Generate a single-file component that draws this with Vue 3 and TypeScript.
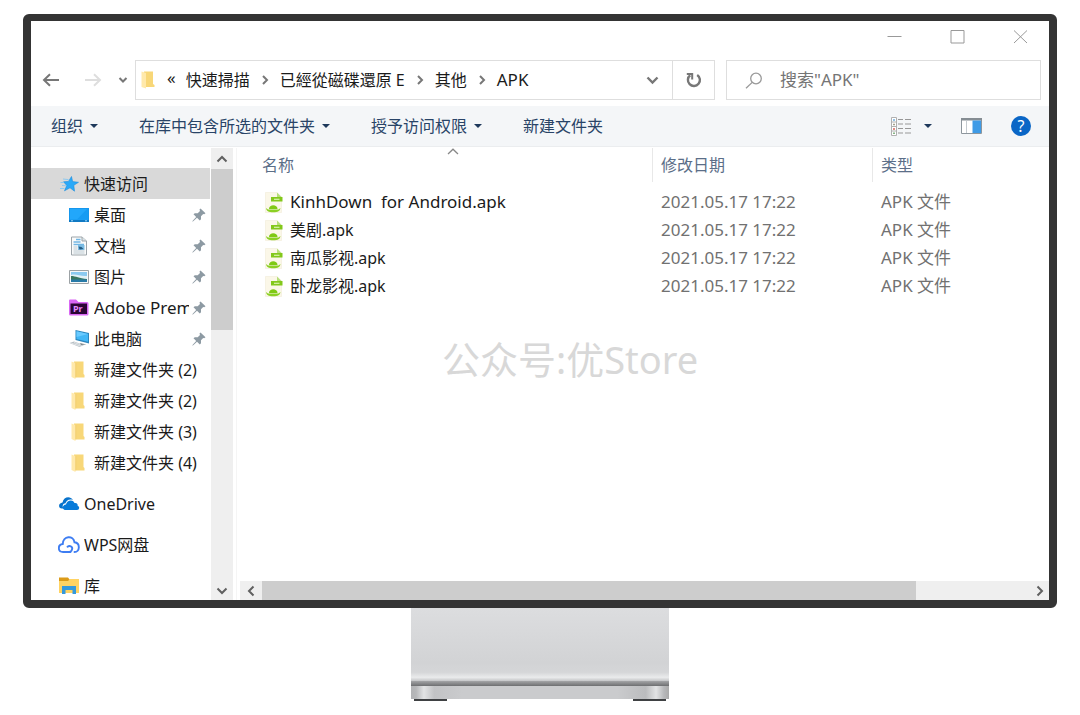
<script setup lang="ts">
interface SideItem {
  label: string
  icon: string
  pinned?: boolean
  level: 'root' | 'child'
  selected?: boolean
}

interface FileRow {
  name: string
  modified: string
  type: string
}

const crumbs: string[] = ['快速掃描', '已經從磁碟還原 E', '其他', 'APK']

const commands: { label: string; menu: boolean }[] = [
  { label: '组织', menu: true },
  { label: '在库中包含所选的文件夹', menu: true },
  { label: '授予访问权限', menu: true },
  { label: '新建文件夹', menu: false },
]

const sideItems: SideItem[] = [
  { label: '快速访问', icon: 'star', level: 'root', selected: true },
  { label: '桌面', icon: 'desktop', level: 'child', pinned: true },
  { label: '文档', icon: 'document', level: 'child', pinned: true },
  { label: '图片', icon: 'picture', level: 'child', pinned: true },
  { label: 'Adobe Prem', icon: 'premiere', level: 'child', pinned: true },
  { label: '此电脑', icon: 'computer', level: 'child', pinned: true },
  { label: '新建文件夹 (2)', icon: 'folder', level: 'child' },
  { label: '新建文件夹 (2)', icon: 'folder', level: 'child' },
  { label: '新建文件夹 (3)', icon: 'folder', level: 'child' },
  { label: '新建文件夹 (4)', icon: 'folder', level: 'child' },
  { label: 'OneDrive', icon: 'onedrive', level: 'root' },
  { label: 'WPS网盘', icon: 'wps', level: 'root' },
  { label: '库', icon: 'library', level: 'root' },
]

const files: FileRow[] = [
  'KinhDown  for Android.apk',
  '美剧.apk',
  '南瓜影视.apk',
  '卧龙影视.apk',
].map((name) => ({ name, modified: '2021.05.17 17:22', type: 'APK 文件' }))

const isLatin = (text: string): boolean => /^[A-Z]\w+ +[\w. ]+$/.test(text)
</script>

<template>
  <div class="stage">
    <section class="monitor">
      <header class="titlebar">
        <button aria-label="最小化">
          <svg width="15" height="15" viewBox="0 0 15 15"><path d="M0.500 7.500H14.500" /></svg>
        </button>
        <button aria-label="最大化">
          <svg width="15" height="15" viewBox="0 0 15 15"><path d="M1 1.500H14V14H1Z" /></svg>
        </button>
        <button aria-label="关闭">
          <svg width="15" height="15" viewBox="0 0 15 15"><path d="M1 1.500L14 14M14 1.500L1 14" /></svg>
        </button>
      </header>

      <div class="navrow">
        <button class="nav-btn back" aria-label="后退">
          <svg width="18" height="14" viewBox="0 0 18 14"><path d="M17 7H2M8 1.200L2 7L8 12.800" /></svg>
        </button>
        <button class="nav-btn forward" aria-label="前进">
          <svg width="18" height="14" viewBox="0 0 18 14"><path d="M1 7H16M10 1.200L16 7L10 12.800" /></svg>
        </button>
        <button class="nav-btn recent" aria-label="最近位置">
          <svg width="10" height="8" viewBox="0 0 10 8"><path d="M1.500 2L5 5.500L8.500 2" /></svg>
        </button>
        <div class="address">
          <svg class="addr-folder" width="14" height="18" viewBox="0 0 14 18">
            <path d="M3 0.500H12V13L13.500 14V16H3Z" fill="#f8d778" />
            <path d="M0.500 0.500L5 2V17.500L0.500 16Z" fill="#ffe9ab" />
          </svg>
          <button class="root-crumb">«</button>
          <template v-for="(crumb, i) in crumbs" :key="crumb">
            <svg v-if="i > 0" class="sep" width="8" height="10" viewBox="0 0 8 10"><path d="M2 1L6 5L2 9" /></svg>
            <button class="crumb" :class="{ last: i === crumbs.length - 1 }">{{ crumb }}</button>
          </template>
          <button class="addr-drop" aria-label="历史记录">
            <svg width="13" height="9" viewBox="0 0 13 9"><path d="M1.500 1.500L6.500 6.500L11.500 1.500" /></svg>
          </button>
          <button class="refresh" aria-label="刷新">
            <svg width="16" height="16" viewBox="0 0 16 16">
              <path d="M11.200 3A6 6 0 1 1 4.200 3.300" fill="none" stroke="#777" stroke-width="2.400" />
              <path d="M0.800 1H7.200V7.400H5.200V3.100H0.800Z" fill="#777" />
            </svg>
          </button>
        </div>
        <label class="search">
          <svg width="18" height="17" viewBox="0 0 18 17">
            <circle cx="11" cy="6.500" r="5.300" />
            <path d="M7.200 10.400L1 16.200" />
          </svg>
          <input type="text" aria-label="搜索" placeholder="搜索&quot;APK&quot;" />
        </label>
      </div>

      <div class="commandbar">
        <button v-for="c in commands" :key="c.label" class="command">
          {{ c.label }}<i v-if="c.menu" class="caret"></i>
        </button>
        <div class="tools">
          <button class="view-btn" aria-label="更改视图">
            <svg width="21" height="19" viewBox="0 0 21 19">
              <path d="M0.500 0.500H5.500V18.500H0.500ZM0.500 5H5.500M0.500 9.500H5.500M0.500 14H5.500" fill="#fff" stroke="#b0b0b0" />
              <path d="M2.200 3H3.800" stroke="#4b9bd8" stroke-width="1.600" />
              <path d="M2.200 7.500H3.800" stroke="#8e8b70" stroke-width="1.600" />
              <path d="M2.200 12H3.800" stroke="#cf3b31" stroke-width="1.600" />
              <path d="M2.200 16.300H3.800" stroke="#68a267" stroke-width="1.600" />
              <path d="M7 2.500H12M14 2.500H20M7 7H12M14 7H20M7 11.500H12M14 11.500H20M7 16H12M14 16H20" stroke="#979797" stroke-width="1.200" />
            </svg>
            <i class="caret"></i>
          </button>
          <button aria-label="预览窗格">
            <svg width="21" height="16" viewBox="0 0 21 16">
              <path d="M0.500 0.500H20.500V15.500H0.500Z" fill="#fff" stroke="#8d969d" />
              <path d="M0 0H21V2.500H0Z" fill="#858d93" />
              <path d="M5.500 2.500V15" stroke="#c5cbd0" />
              <path d="M11.500 2.500H20V15H11.500Z" fill="#3f9be6" />
            </svg>
          </button>
          <button class="help" aria-label="帮助"><span>?</span></button>
        </div>
      </div>

      <div class="content">
        <nav class="sidebar">
          <button
            v-for="(item, i) in sideItems"
            :key="i"
            class="side-item"
            :class="[item.level, { selected: item.selected, spaced: item.level === 'root' && i > 0 }]"
          >
            <svg class="side-icon" width="22" height="20" viewBox="0 0 22 20">
              <template v-if="item.icon === 'star'">
                <path d="M13.500 2.500L14.600 7.600L20.500 8.300L15.800 11.300L16.500 17.200L12 13.800L6.500 16.800L8.800 11.500L5.500 7.800L10.500 7.400Z" fill="#2aa9f8" stroke="#1b8ddd" stroke-width="0.600" />
                <path d="M5 5L10.500 5.600M2.500 8.500L6 8.500M4 11.500L8 11.800M2 14.500H6.500" stroke="#8ec9ef" />
              </template>
              <template v-else-if="item.icon === 'desktop'">
                <path d="M1 3H21V17H1Z" fill="#1597ed" />
                <path d="M2 4H20V14.500H2Z" fill="#22a7fb" />
                <path d="M9 14.500L19 4H20V14.500Z" fill="#169cf3" />
                <path d="M1 16H21" stroke="#0f6fb4" stroke-width="1.500" />
                <path d="M3 15.800H5M17 15.800H19" stroke="#9bd9ff" />
              </template>
              <template v-else-if="item.icon === 'document'">
                <path d="M3.500 1H14L18.500 5V19H3.500Z" fill="#fafbfb" stroke="#9da5aa" />
                <path d="M14 1V5H18.500" fill="#dce4e8" stroke="#9da5aa" />
                <path d="M8 3.500H12.500M5.500 6H12.500M5.500 8.500H16" stroke="#72b6e4" stroke-width="1.500" />
                <path d="M5.500 11H9.500M5.500 13H9.500M5.500 15H16.500M5.500 17H16.500" stroke="#b4c3cc" stroke-width="0.900" />
                <path d="M10 9H16.500V14H10Z" fill="#7cbde4" />
                <path d="M10.500 10.500L13.500 11L15.500 13L11.500 13.500Z" fill="#265e86" />
              </template>
              <template v-else-if="item.icon === 'picture'">
                <path d="M1.500 3.500H20.500V16.500H1.500Z" fill="#f8f8f8" stroke="#9ca2a5" />
                <path d="M3 5H19V15H3Z" fill="#8bcaf0" />
                <path d="M3 8C8 6.500 12 9.500 19 9V12H3Z" fill="#e2f1f6" />
                <path d="M3 9C8 9 11 11.500 19 12V13H3Z" fill="#397761" />
                <path d="M3 12.500H19V15H3Z" fill="#287aa7" />
              </template>
              <template v-else-if="item.icon === 'premiere'">
                <path d="M1 2.500Q1 1.500 2 1.500H8L10.500 4H19Q20.500 4 20.500 5.500V16Q20.500 17.500 19 17.500H2.500Q1 17.500 1 16Z" fill="#d967f4" />
                <path d="M2.500 5.500H19V16H2.500Z" fill="#2b0635" />
                <text x="5" y="14" font-size="9" font-weight="700" fill="#e58bff">Pr</text>
              </template>
              <template v-else-if="item.icon === 'computer'">
                <path d="M7.500 1L21 4V14.500L7.500 11Z" fill="#2c86bd" />
                <path d="M8.500 2.300L20 5V12.800L8.500 10Z" fill="#42b7f6" />
                <path d="M8.500 2.300L20 5L8.500 8Z" fill="#69caff" />
                <path d="M1.500 14L6 12.500L16 16L11.500 18Z" fill="#b8c0c5" />
                <path d="M3.500 14.300L12.500 17M6 13.500L14 16.200" stroke="#f1f4f5" stroke-width="0.700" />
                <path d="M12 14L15 14.800L18.500 15.500L13 16Z" fill="#7b858b" />
              </template>
              <template v-else-if="item.icon === 'folder'">
                <path d="M6 1.500H15.500V14L16.500 15V17.500H6Z" fill="#f8d778" />
                <path d="M3.500 1.500L7.500 3V19L3.500 17Z" fill="#ffe9ab" />
                <path d="M7.700 3V17.500" stroke="#ecc766" stroke-width="0.500" />
              </template>
              <template v-else-if="item.icon === 'onedrive'">
                <path d="M4 14.500C0 14.500 0 9 4.500 8.500C5.500 3 12 1.500 15 6C10.500 4.500 8 7.500 7.500 9.200C4.800 9.300 4 12 5.500 14.500Z" fill="#0873cc" />
                <path d="M7 16C4 15.500 4 10.800 8 10.500C9 6 15 5 16.500 9C19 8.500 20 10.500 19.700 12C22 12.500 21.500 16 19 16Z" fill="#087bd9" />
              </template>
              <template v-else-if="item.icon === 'wps'">
                <g fill="none" stroke="#3e7df2" stroke-width="1.900" stroke-linecap="round">
                  <path d="M12.500 17H5C-0.500 17 -0.500 9.500 4.800 9C4.800 0.500 15.500 0 16.500 7.300C22.500 8 22 17 16.500 17" />
                  <path d="M9.500 11.700C12 9.800 15 12 14 14.500C13.500 16 12.500 17 11 17" />
                </g>
              </template>
              <template v-else>
                <path d="M1 1.500H10L12 4V8H1Z" fill="#dc9b18" />
                <path d="M1 5H10L12 3H21V17H1Z" fill="#ffd363" />
                <path d="M4 18V10H18V18H14.500V14H7.500V18Z" fill="#3599dc" />
              </template>
            </svg>
            <span class="side-label" :class="{ latin: isLatin(item.label) }">{{ item.label }}</span>
            <svg v-if="item.pinned" class="pin" width="14" height="14" viewBox="0 0 14 14">
              <path d="M8.500 0.500L13.500 5.200L12.200 6.300L11.200 6L9 8.300V11.300L7.800 12.500L5 9.700L1.200 13.300L0.300 13.700L0.700 12.700L4.200 9L1.500 6.200L2.800 5.200H5.700L8 3L7.500 1.600Z" fill="#8d9aa3" />
            </svg>
          </button>
        </nav>

        <div class="scroll-v">
          <button aria-label="向上滚动">
            <svg width="12" height="8" viewBox="0 0 12 8"><path d="M1.500 6.500L6 2L10.500 6.500" /></svg>
          </button>
          <div class="track"><div class="thumb"></div></div>
          <button class="down" aria-label="向下滚动">
            <svg width="12" height="8" viewBox="0 0 12 8"><path d="M1.500 1.500L6 6L10.500 1.500" /></svg>
          </button>
        </div>

        <main class="listing">
          <table>
            <colgroup>
              <col />
              <col class="col-date" />
              <col class="col-type" />
            </colgroup>
            <thead>
              <tr>
                <th scope="col">
                  名称
                  <svg class="sort" width="12" height="7" viewBox="0 0 12 7"><path d="M1 6L6 1.200L11 6" /></svg>
                </th>
                <th scope="col">修改日期</th>
                <th scope="col">类型</th>
              </tr>
            </thead>
            <tbody>
              <tr v-for="f in files" :key="f.name">
                <td>
                  <div class="file">
                    <svg width="18" height="21" viewBox="0 0 18 21">
                      <path d="M0.500 0.500H12L16.500 5V20.500H0.500Z" fill="#fbf7e8" stroke="#f1ecd9" stroke-width="0.600" />
                      <path d="M12 0.500L16.500 5H12Z" fill="#b7df79" />
                      <path d="M6 5H17.500V9.500H6Z" fill="#83c81b" />
                      <path d="M9 7.300H14.500" stroke="#d8f1ad" stroke-width="1.200" />
                      <path d="M4 17C4 12 12.500 12 12.500 17Z" fill="#7fc914" />
                      <path d="M1 16L3 17.500H13.500L15.500 16C15 19 13 20.300 8.300 20.300C3.500 20.300 1.500 19 1 16Z" fill="#8bd024" />
                    </svg>
                    <span :class="{ latin: isLatin(f.name) }">{{ f.name }}</span>
                  </div>
                </td>
                <td>{{ f.modified }}</td>
                <td>{{ f.type }}</td>
              </tr>
            </tbody>
          </table>
          <p class="watermark">公众号:优Store</p>
          <div class="scroll-h">
            <button aria-label="向左滚动">
              <svg width="8" height="12" viewBox="0 0 8 12"><path d="M6.500 1.500L2 6L6.500 10.500" /></svg>
            </button>
            <div class="track"><div class="thumb"></div></div>
            <button class="right" aria-label="向右滚动">
              <svg width="8" height="12" viewBox="0 0 8 12"><path d="M1.500 1.500L6 6L1.500 10.500" /></svg>
            </button>
          </div>
        </main>
      </div>
    </section>
    <div class="stand">
      <div class="neck"></div>
      <div class="edge"></div>
      <div class="foot"></div>
      <div class="pads"><i></i><i></i></div>
    </div>
  </div>
</template>

<style>
body {
  margin: 0;
  background: #fff;
}
</style>

<style scoped>
.stage {
  box-sizing: border-box;
  height: 100vh;
  min-height: 480px;
  padding: 14px 23px;
  display: flex;
  flex-direction: column;
  align-items: center;
  font: 16px/24px "Noto Sans", "Noto Sans CJK SC", sans-serif;
  color: #1b1b1b;
}
button {
  border: 0;
  padding: 0;
  margin: 0;
  background: none;
  font: inherit;
  color: inherit;
  display: flex;
  align-items: center;
  white-space: pre;
}
svg {
  flex: none;
  fill: none;
}
.monitor {
  box-sizing: border-box;
  align-self: stretch;
  flex: 1;
  min-height: 0;
  display: flex;
  flex-direction: column;
  border: 8px solid #343434;
  border-top-width: 7px;
  border-radius: 6px;
  background: #fff;
}
.titlebar {
  height: 31px;
  flex: none;
  display: flex;
  justify-content: flex-end;
  gap: 48px;
  padding-right: 21px;
}
.titlebar svg {
  stroke: #999;
  stroke-width: 1;
}
.navrow {
  flex: none;
  display: flex;
  height: 40px;
  margin: 8px 8px 6px 11px;
}
.nav-btn svg {
  stroke: #777;
  stroke-width: 2;
}
.nav-btn.forward {
  margin-left: 24px;
}
.nav-btn.forward svg {
  stroke: #dedede;
}
.nav-btn.recent {
  margin-left: 16px;
  margin-right: 7px;
}
.address {
  flex: 1;
  display: flex;
  align-items: center;
  border: 1px solid #dedede;
  padding-left: 5px;
}
.address .root-crumb {
  margin: 0 10px 4px 12px;
  font-size: 17px;
}
.sep {
  margin: 0 11px;
  stroke: #777;
  stroke-width: 2;
}
.crumb.last,
.latin {
  font-size: 17px;
}
.addr-drop {
  margin-left: auto;
  margin-right: 13px;
}
.addr-drop svg {
  stroke: #777;
  stroke-width: 2.4px;
}
.refresh {
  align-self: stretch;
  width: 42px;
  justify-content: center;
  border-left: 1px solid #dedede;
}
.search {
  box-sizing: border-box;
  width: 315px;
  margin-left: 11px;
  padding-left: 18px;
  display: flex;
  align-items: center;
  gap: 17px;
  border: 1px solid #dedede;
}
.search svg {
  stroke: #999;
  stroke-width: 1.3px;
}
.search input {
  flex: 1;
  min-width: 0;
  border: 0;
  padding: 0;
  outline: 0;
  background: none;
  font: inherit;
  font-size: 17px;
}
.search input::placeholder {
  color: #757575;
  opacity: 1;
}
.commandbar {
  flex: none;
  display: flex;
  gap: 41px;
  height: 40px;
  padding: 0 18px 0 20px;
  background: #f4f6f8;
  border-bottom: 1px solid #ebedef;
  color: #294467;
}
.caret {
  margin-left: 7px;
  border: 4px solid transparent;
  border-top-color: #1e395b;
  border-bottom: 0;
}
.tools {
  margin-left: auto;
  display: flex;
  gap: 29px;
}
.view-btn .caret {
  margin-left: 12px;
}
.help span {
  width: 20px;
  height: 20px;
  line-height: 20px;
  border-radius: 50%;
  background: #0a66c6;
  color: #fff;
  text-align: center;
}
.content {
  flex: 1;
  min-height: 0;
  display: flex;
  padding-top: 1px;
}
.sidebar {
  box-sizing: border-box;
  width: 180px;
  padding-top: 20px;
  overflow: hidden;
}
.side-item {
  box-sizing: border-box;
  width: 179px;
  height: 31px;
  padding-left: 37px;
}
.side-item.root {
  padding-left: 27px;
}
.root .side-icon {
  margin-right: 4px;
}
.side-icon {
  margin-right: 4px;
}
.selected {
  background: #d9d9d9;
}
.spaced {
  margin-top: 10px;
}
.side-label {
  flex: 1;
  min-width: 0;
  overflow: hidden;
  text-align: left;
}
.pin {
  margin: 0 4px 0 3px;
}
.scroll-v {
  width: 22px;
  display: flex;
  flex-direction: column;
  background: #efefef;
  border-right: 1px solid #fff;
}
.scroll-v button {
  height: 21px;
  justify-content: center;
}
.scroll-v .down {
  height: 19px;
}
.scroll-v svg,
.scroll-h svg {
  stroke: #606060;
  stroke-width: 2;
}
.track {
  flex: 1;
}
.thumb {
  background: #cdcdcd;
}
.scroll-v .thumb {
  height: 39%;
}
.listing {
  position: relative;
  flex: 1;
  min-width: 0;
  margin-left: 2px;
  padding-left: 3px;
  border-left: 1px solid #f5f5f5;
  display: flex;
  flex-direction: column;
}
table {
  margin-left: 14px;
  table-layout: fixed;
  border-collapse: separate;
  border-spacing: 0;
  width: calc(100% - 14px);
}
.col-date {
  width: 220px;
}
.col-type {
  width: 177px;
}
th {
  position: relative;
  height: 34px;
  padding: 0 8px;
  text-align: left;
  font-weight: 400;
  color: #5b6e88;
}
th + th {
  border-left: 1px solid #e8e8e8;
}
.sort {
  position: absolute;
  top: 0;
  left: calc(50% - 6px);
  stroke: #888;
  stroke-width: 1.3px;
}
td {
  height: 28px;
  padding: 0 9px;
  font-size: 17px;
  color: #717171;
}
tbody::before {
  content: "";
  display: block;
  height: 6px;
}
td:first-child {
  padding-left: 11px;
  font-size: 16px;
  color: #1b1b1b;
}
.file {
  display: flex;
  align-items: center;
  gap: 7px;
  white-space: pre;
}
.watermark {
  position: absolute;
  top: 187px;
  left: 205px;
  margin: 0;
  font-size: 38px;
  line-height: 48px;
  white-space: nowrap;
  color: #d8d8d8;
}
.scroll-h {
  margin-top: auto;
  height: 19px;
  display: flex;
  background: #efefef;
}
.scroll-h button {
  width: 22px;
  justify-content: center;
}
.scroll-h .right {
  width: 18px;
}
.scroll-h .thumb {
  width: 85%;
  height: 100%;
}
.stand {
  flex: none;
  width: 25%;
  min-width: 200px;
  height: 93px;
}
.neck {
  height: 73px;
  background: linear-gradient(#dcdddf, #d2d3d5 75%, #d5d6d8 88%, #eaebec 95%, #c4c5c7);
}
.edge {
  height: 5px;
  background: linear-gradient(#a4a5a7, #6e6f71);
}
.foot {
  height: 13px;
  background: linear-gradient(90deg, #b2b3b5, #b7b8ba 2%, #e3e4e5 5%, #c2c3c5 9%, #cacbcd 20%, #cacbcd 80%, #bbbcbe 91%, #e3e4e5 95%, #b7b8ba 98%, #aaa);
}
.pads {
  display: flex;
  justify-content: space-between;
  padding: 0 3px;
}
.pads i {
  width: 33px;
  height: 2px;
  background: #3f4143;
}
</style>
